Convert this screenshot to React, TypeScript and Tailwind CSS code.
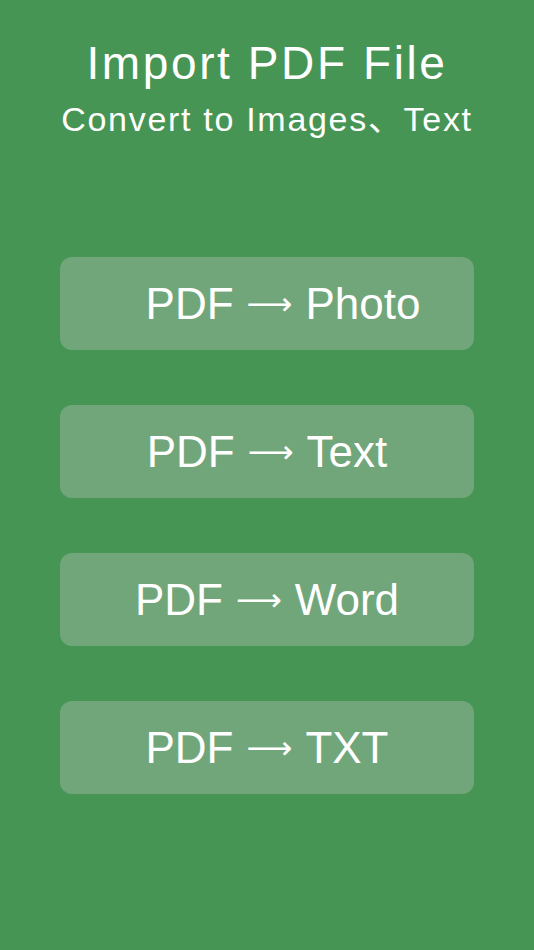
import React from 'react';

const options = [
  { from: 'PDF', to: 'Photo', shift: 'pl-8' },
  { from: 'PDF', to: 'Text', shift: '' },
  { from: 'PDF', to: 'Word', shift: '' },
  { from: 'PDF', to: 'TXT', shift: '' },
];

const App: React.FC = () => {
  return (
    <div
      className="min-h-[950px] w-full bg-[#479555] flex flex-col items-center text-white"
      style={{ fontFamily: '"Liberation Sans", "Noto Sans CJK SC", sans-serif' }}
    >
      {/* Header */}
      <h1 className="mt-[36px] text-[46px] leading-[54px] tracking-[2.6px]">Import PDF File</h1>
      <p className="mt-[9px] text-[34px] leading-[40px] tracking-[1.7px]">Convert to Images、Text</p>

      {/* Options */}
      <div className="mt-[118px] flex flex-col gap-[55px] w-[414px]">
        {options.map((opt) => (
          <button
            key={opt.to}
            className={`h-[93px] w-full rounded-[12px] bg-[#71a67b] flex items-center justify-center text-[44px] leading-none ${opt.shift}`}
          >
            <span>{opt.from}</span>
            <span
              className="mx-[13px] text-[32px] leading-none"
              style={{ fontFamily: '"DejaVu Sans", sans-serif' }}
            >
              ⟶
            </span>
            <span>{opt.to}</span>
          </button>
        ))}
      </div>
    </div>
  );
};

export default App;
